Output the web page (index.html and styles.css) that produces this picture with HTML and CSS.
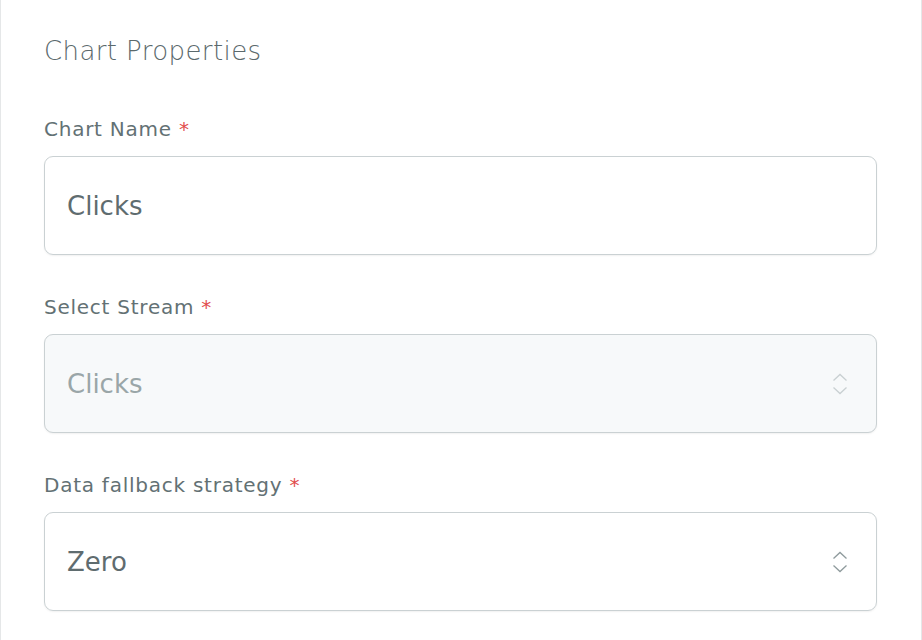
FILE: index.html
```html
<!DOCTYPE html>
<html>
<head>
<meta charset="utf-8">
<link rel="stylesheet" href="styles.css">
</head>
<body>
<div class="card">
  <h2 class="title">Chart Properties</h2>
  <div class="field">
    <label class="label">Chart Name <span class="req">*</span></label>
    <div class="input">Clicks</div>
  </div>
  <div class="field">
    <label class="label">Select Stream <span class="req">*</span></label>
    <div class="input select disabled">Clicks
      <svg class="chev" width="16" height="24" viewBox="0 0 16 24"><path d="M1.5 8.5 L8 2.5 L14.5 8.5 M1.5 15.5 L8 21.5 L14.5 15.5" fill="none" stroke="currentColor" stroke-width="1.3"/></svg>
    </div>
  </div>
  <div class="field">
    <label class="label">Data fallback strategy <span class="req">*</span></label>
    <div class="input select">Zero
      <svg class="chev" width="16" height="24" viewBox="0 0 16 24"><path d="M1.5 8.5 L8 2.5 L14.5 8.5 M1.5 15.5 L8 21.5 L14.5 15.5" fill="none" stroke="currentColor" stroke-width="1.3"/></svg>
    </div>
  </div>
</div>
</body>
</html>
```
FILE: styles.css
```css
html, body {
  margin: 0;
  padding: 0;
  background: #ffffff;
  font-family: "DejaVu Sans", "Open Sans", sans-serif;
}
.card {
  box-sizing: border-box;
  width: 922px;
  height: 640px;
  border-left: 1px solid #e5e7e8;
  border-right: 1px solid #e5e7e8;
  padding: 31px 44px 0 43px;
  overflow: hidden;
}
.title {
  margin: 0 0 43px 0;
  font-size: 26px;
  line-height: 40px;
  font-weight: 200;
  letter-spacing: 0.4px;
  color: #5b696c;
}
.field {
  display: flex;
  flex-direction: column;
  margin-bottom: 37px;
}
.label {
  font-size: 20px;
  line-height: 30px;
  letter-spacing: 0.75px;
  color: #637174;
  margin-bottom: 12px;
}
.req {
  color: #e24d4d;
}
.input {
  box-sizing: border-box;
  height: 99px;
  border: 1px solid #cad1d3;
  border-radius: 9px;
  padding: 0 22px;
  display: flex;
  align-items: center;
  justify-content: space-between;
  font-size: 26px;
  color: #5f6c6f;
  box-shadow: 0 1px 2px rgba(0,0,0,0.06);
}
.disabled {
  background: #f7f9fa;
  color: #9aa6a8;
}
.chev {
  color: #8f9b9d;
  margin-right: 6px;
}
.disabled .chev {
  color: #c9d0d2;
}
```
